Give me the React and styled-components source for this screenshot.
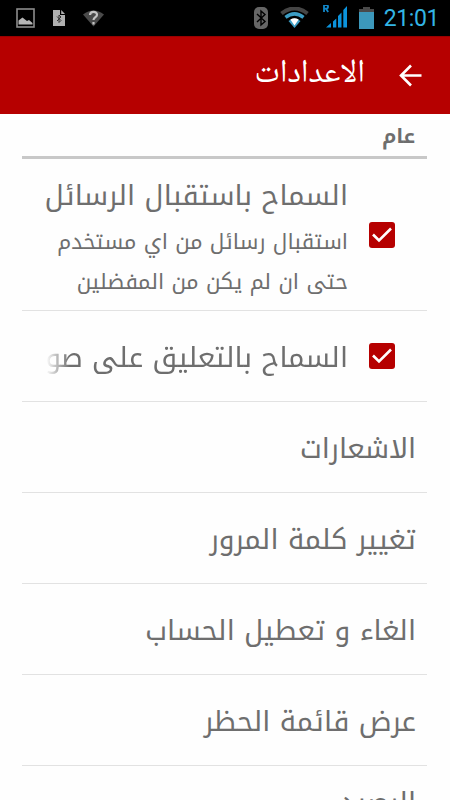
import React from 'react'
import styled, { createGlobalStyle } from 'styled-components'


const kufi = "'Noto Kufi Arabic', 'Noto Sans Arabic', 'DejaVu Sans', sans-serif"
const naskh = "'Noto Naskh Arabic UI', 'Noto Naskh Arabic', 'DejaVu Sans', sans-serif"

const GlobalStyle = createGlobalStyle`
  body {
    margin: 0;
    background: #fefefe;
    overflow: hidden;
  }
  * {
    box-sizing: border-box;
  }
`

const Screen = styled.div`
  display: flex;
  flex-direction: column;
  height: 800px;
  overflow: hidden;
  background: #fefefe;
  color: #6e6e6e;
`

const StatusBar = styled.div`
  display: flex;
  align-items: center;
  justify-content: space-between;
  flex: none;
  height: 36px;
  padding: 0 11px 0 16px;
  background: #000;
`

const StatusGroup = styled.div`
  display: flex;
  align-items: center;
  gap: ${p => p.$gap}px;
`

const Clock = styled.span`
  margin-left: -2px;
  padding-top: 1px;
  color: #33b5e5;
  font-family: Roboto, sans-serif;
  font-size: 23px;
  line-height: 36px;
  letter-spacing: -0.4px;
`

const Toolbar = styled.header`
  display: flex;
  align-items: center;
  flex: none;
  gap: 34px;
  height: 78px;
  padding: 0 28px;
  direction: rtl;
  background: #b60000;
  border-top: 1px solid #990000;
`

const ToolbarTitle = styled.h1`
  margin: 0;
  padding-bottom: 4px;
  color: #fff;
  font-family: ${naskh};
  font-size: 32.500px;
  font-weight: 400;
  line-height: 40px;
`

const List = styled.main`
  display: flex;
  flex-direction: column;
  padding: 0 23px 0 22px;
  direction: rtl;
  font-family: ${kufi};
`

const SectionTitle = styled.h2`
  flex: none;
  height: 45px;
  margin: 0;
  padding: 0 12px;
  border-bottom: 3px solid #c8c8c8;
  font-size: 20px;
  font-weight: 700;
  line-height: 44px;
`

const Row = styled.div`
  display: flex;
  align-items: center;
  flex: none;
  gap: 21px;
  height: ${p => p.$tall ? 152 : 91}px;
  padding: 3px 11px 0 24px;
  border-bottom: 1px solid #e2e2e2;
`

const CheckRow = styled(Row)`
  padding-right: 32px;
`

const RowText = styled.div`
  flex: 1;
  min-width: 0;
`

const RowTitle = styled.div`
  font-size: 28px;
  line-height: 52px;
  white-space: nowrap;
  ${p => p.$fade && `
    overflow: hidden;
    mask-image: linear-gradient(to right, transparent, #000 24px);
  `}
`

const Summary = styled.div`
  font-size: 21.500px;
  line-height: 40px;
`

const Checkbox = styled.span`
  display: flex;
  flex: none;
  width: 26px;
  height: 26px;
  margin-bottom: 3px;
  border-radius: 3px;
  background: #b60000;
`


const PictureIcon = () => (
  <svg width="19" height="20" viewBox="0 0 19 20">
    <rect x="1" y="1" width="17" height="18" fill="none" stroke="#8c8c8c" strokeWidth="1.6" />
    <path d="M2.500 16.500v-4l2-1.500 2-1.500 2.500 2 2 1.500 2-1 3.500 3v1.500z" fill="#b5b5b5" />
  </svg>
)

const FileIcon = () => (
  <svg width="12" height="16" viewBox="0 0 12 16">
    <path d="M0 0h7v5h5v11H0zM8.200 0 12 4H8.200z" fill="#b0b0b0" />
    <path d="M4 6.500l4 4-2 2V5l2 2-4 4" fill="none" stroke="#333" />
  </svg>
)

const WifiUnknownIcon = () => (
  <svg width="21" height="17" viewBox="0 0 21 17">
    <path d="M0 4.500Q10.500-3.500 21 4.500L10.500 16.500z" fill="#4a4a4a" />
    <path d="M7 5c.3-4.200 7-4 7-.3 0 2.600-3.300 2.300-3.500 5.300M10.500 12v2.500" fill="none" stroke="#c4c4c4" strokeWidth="2.200" />
  </svg>
)

const BluetoothIcon = () => (
  <svg width="14" height="22" viewBox="0 0 14 22">
    <rect width="14" height="22" rx="5" fill="#666" />
    <path d="M3 7l8 7.500-4 3.500V4l4 3.500L3 15" fill="none" stroke="#000" strokeWidth="1.400" />
  </svg>
)

const WifiIcon = () => (
  <svg width="29" height="22" viewBox="0 0 29 22">
    <path d="M1.500 6.500Q14.500-3.500 27.500 6.500" fill="none" stroke="#454545" strokeWidth="4" />
    <path d="M5.500 10.300Q14.500 3.500 23.500 10.300" fill="none" stroke="#3c9dc4" strokeWidth="3.500" />
    <path d="M8.500 14Q14.500 9 20.500 14L14.500 21z" fill="#3c9dc4" />
    <path d="M10.300 12.500Q14.500 10 18.700 12.500L14.500 18.500z" fill="#fff" />
  </svg>
)

// signal bars with the roaming mark at the top left
const SignalIcon = () => (
  <svg width="26" height="26" viewBox="0 0 26 26">
    <path d="M3 7V0h2.200a1.700 1.700 0 0 1 0 3.700H3M5 3.700L7.200 7" fill="none" stroke="#1187c9" strokeWidth="1.800" />
    <path d="M5 22.500l5-4.500v4.500zM12 16.500l3.300-3v9h-3.300zM17 11l3.500-3.500v15H17zM22.300 5l3.700-4v21.500h-3.700z" fill="#0b93dc" />
  </svg>
)

const BatteryIcon = () => (
  <svg width="15" height="22" viewBox="0 0 15 22">
    <path d="M4 0h7v2h4v4H0V2h4z" fill="#4a4a4a" />
    <path d="M0 5h15v17H0z" fill="#3c98bb" />
  </svg>
)

const BackArrow = () => (
  <svg width="23" height="24" viewBox="0 0 23 24">
    <path d="M22.500 11.500H2M12 1.500l-10 10 10 10" fill="none" stroke="#fff" strokeWidth="2.600" />
  </svg>
)

const Checked = () => (
  <Checkbox role="checkbox" aria-checked="true">
    <svg width="26" height="26" viewBox="0 0 26 26">
      <path d="M4 12.500l6 6L22 6.500" fill="none" stroke="#fff" strokeWidth="2.600" />
    </svg>
  </Checkbox>
)


const links = [
  'الاشعارات',
  'تغيير كلمة المرور',
  'الغاء و تعطيل الحساب',
  'عرض قائمة الحظر',
]

export default function App() {
  return (
    <>
      <GlobalStyle />
      <Screen>
        <StatusBar>
          <StatusGroup $gap={18}>
            <PictureIcon />
            <FileIcon />
            <WifiUnknownIcon />
          </StatusGroup>
          <StatusGroup $gap={12}>
            <BluetoothIcon />
            <WifiIcon />
            <SignalIcon />
            <BatteryIcon />
            <Clock>21:01</Clock>
          </StatusGroup>
        </StatusBar>
        <Toolbar>
          <BackArrow />
          <ToolbarTitle>الاعدادات</ToolbarTitle>
        </Toolbar>
        <List>
          <SectionTitle>عام</SectionTitle>
          <CheckRow $tall>
            <Checked />
            <RowText>
              <RowTitle>السماح باستقبال الرسائل</RowTitle>
              <Summary>استقبال رسائل من اي مستخدم حتى ان لم يكن من المفضلين</Summary>
            </RowText>
          </CheckRow>
          <CheckRow>
            <Checked />
            <RowText>
              <RowTitle $fade>السماح بالتعليق على صوري</RowTitle>
            </RowText>
          </CheckRow>
          {links.map(label => (
            <Row key={label}>
              <RowTitle>{label}</RowTitle>
            </Row>
          ))}
          <Row $tall>
            <RowText>
              <RowTitle>الرصيد</RowTitle>
              <Summary>&nbsp;<br />&nbsp;</Summary>
            </RowText>
          </Row>
        </List>
      </Screen>
    </>
  )
}
